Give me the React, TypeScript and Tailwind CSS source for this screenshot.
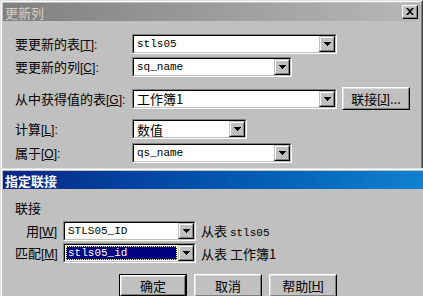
import React from 'react';

const cjk = "font-['Noto_Sans_CJK_SC','Liberation_Sans',sans-serif]";
const mono = "font-['Liberation_Mono','Noto_Sans_CJK_SC',monospace]";

function Arrow() {
  return (
    <svg width="7" height="4" viewBox="0 0 7 4" className="block">
      <path d="M0 0h7v1H0zM1 1h5v1H1zM2 2h3v1H2zM3 3h1v1H3z" fill="#000" />
    </svg>
  );
}

function DropButton() {
  return (
    <div className="flex h-full w-[16px] shrink-0 border border-t-[#c0c0c0] border-l-[#c0c0c0] border-b-black border-r-black bg-[#c0c0c0]">
      <div className="flex flex-1 items-center justify-center border border-t-white border-l-white border-b-[#808080] border-r-[#808080] bg-[#c0c0c0]">
        <Arrow />
      </div>
    </div>
  );
}

// CJK text followed by a [K] access key, brackets in a narrower latin face
function Lbl({ text, k, colon = false }: { text: string; k: string; colon?: boolean }) {
  return (
    <>
      {text}
      <span className="font-['Liberation_Sans',sans-serif] text-[12px]">
        [<u>{k}</u>]{colon ? ':' : ''}
      </span>
    </>
  );
}

function Combo({
  width,
  children,
  isMono = true,
  selected = false,
}: {
  width: string;
  children: React.ReactNode;
  isMono?: boolean;
  selected?: boolean;
}) {
  return (
    <div className={`flex h-[20px] shrink-0 border border-t-[#808080] border-l-[#808080] border-b-white border-r-white ${width}`}>
      <div className="flex flex-1 border border-t-black border-l-black border-b-[#c0c0c0] border-r-[#c0c0c0] bg-white">
        {selected ? (
          <div className="flex flex-1 p-[1px]">
            <div className={`flex flex-1 items-center border border-dotted border-[#ffff80] bg-[#000080] pl-[1px] text-[11px] leading-none text-white ${mono}`}>
              {children}
            </div>
          </div>
        ) : (
          <div
            className={`flex flex-1 items-center pl-[3px] leading-none text-black ${
              isMono ? `text-[11px] ${mono}` : `text-[13px] ${cjk}`
            }`}
          >
            {children}
          </div>
        )}
        <DropButton />
      </div>
    </div>
  );
}

function Button({ children, width, isDefault = false }: { children: React.ReactNode; width: string; isDefault?: boolean }) {
  return (
    <div className={`flex h-[23px] shrink-0 ${isDefault ? 'border border-black' : ''} ${width}`}>
      <div className="flex flex-1 border border-t-white border-l-white border-b-black border-r-black">
        <div className={`flex flex-1 items-center justify-center whitespace-nowrap border border-t-[#dfdfdf] border-l-[#dfdfdf] border-b-[#808080] border-r-[#808080] bg-[#c0c0c0] text-[13px] leading-none text-black ${cjk}`}>
          {children}
        </div>
      </div>
    </div>
  );
}

function Row({ label, children, className = '' }: { label: React.ReactNode; children: React.ReactNode; className?: string }) {
  return (
    <div className={`flex items-center ${className}`}>
      <div className="w-[129px] shrink-0 whitespace-nowrap pl-[12px] text-[13px] leading-none text-black">{label}</div>
      {children}
    </div>
  );
}

export default function App() {
  return (
    <div className={`h-[296px] w-[423px] overflow-hidden bg-[#c0c0c0] ${cjk}`}>
      {/* 更新列 window (inactive) */}
      <div className="flex h-[168px] flex-col border-l border-t border-r border-l-[#dfdfdf] border-t-[#dfdfdf] border-r-[#404040]">
        <div className="flex flex-1 flex-col border-l border-t border-r border-l-white border-t-white border-r-[#808080] p-[1px] pb-0">
          <div className="flex h-[18px] items-center justify-between bg-gradient-to-r from-[#808080] to-[#b8b8b8] pl-[2px] pr-[2px]">
            <span className="text-[13px] leading-none text-[#d4d0c8]">更新列</span>
            <div className="flex h-[14px] w-[16px] border border-t-white border-l-white border-b-black border-r-black">
              <div className="flex flex-1 items-center justify-center border-b border-r border-b-[#808080] border-r-[#808080] bg-[#c0c0c0]">
                <svg width="8" height="7" viewBox="0 0 8 7">
                  <path d="M0 0h2l2 2 2-2h2L5 3.5 8 7H6L4 5 2 7H0l3-3.5z" fill="#000" />
                </svg>
              </div>
            </div>
          </div>

          <Row className="mt-[13px]" label={<Lbl text="要更新的表" k="T" colon />}>
            <Combo width="w-[205px]">stls05</Combo>
          </Row>
          <Row className="mt-[3px]" label={<Lbl text="要更新的列" k="C" colon />}>
            <Combo width="w-[160px]">sq_name</Combo>
          </Row>
          <Row className="mt-[10px]" label={<Lbl text="从中获得值的表" k="G" colon />}>
            <Combo width="w-[205px]" isMono={false}>工作簿1</Combo>
            <div className="ml-[5px]">
              <Button width="w-[68px]"><Lbl text="联接" k="J" />...</Button>
            </div>
          </Row>
          <Row className="mt-[9px]" label={<Lbl text="计算" k="L" colon />}>
            <Combo width="w-[115px]" isMono={false}>数值</Combo>
          </Row>
          <Row className="mt-[4px]" label={<Lbl text="属于" k="O" colon />}>
            <Combo width="w-[160px]">qs_name</Combo>
          </Row>
        </div>
      </div>

      {/* 指定联接 window (active) */}
      <div className="w-[440px] border-l border-t border-l-[#dfdfdf] border-t-[#dfdfdf]">
        <div className="border-l border-t border-l-white border-t-white p-[1px]">
          <div className="flex h-[18px] items-center bg-gradient-to-r from-[#08268a] to-[#1284d2] pl-[2px]">
            <span className="text-[13px] font-bold leading-none text-white">指定联接</span>
          </div>

          <div className="mt-[12px] pl-[12px] text-[13px] leading-none text-black">联接</div>

          <div className="mt-[7px] flex items-center">
            <div className="w-[60px] whitespace-nowrap pr-[6px] text-right text-[13px] leading-none">
              <Lbl text="用" k="W" />
            </div>
            <Combo width="w-[133px]">STLS05_ID</Combo>
            <div className="ml-[5px] whitespace-nowrap text-[13px] leading-none">
              从表 <span className={`text-[11px] ${mono}`}>stls05</span>
            </div>
          </div>

          <div className="mt-[2px] flex items-center">
            <div className="w-[60px] whitespace-nowrap pl-[12px] text-[13px] leading-none">
              <Lbl text="匹配" k="M" />
            </div>
            <Combo width="w-[133px]" selected>stls05_id</Combo>
            <div className="ml-[5px] whitespace-nowrap text-[13px] leading-none">从表 工作簿1</div>
          </div>

          <div className="mt-[11px] flex gap-[7px] pl-[116px]">
            <Button width="w-[68px]" isDefault>确定</Button>
            <Button width="w-[68px]">取消</Button>
            <Button width="w-[68px]"><Lbl text="帮助" k="H" /></Button>
          </div>
        </div>
      </div>
    </div>
  );
}
